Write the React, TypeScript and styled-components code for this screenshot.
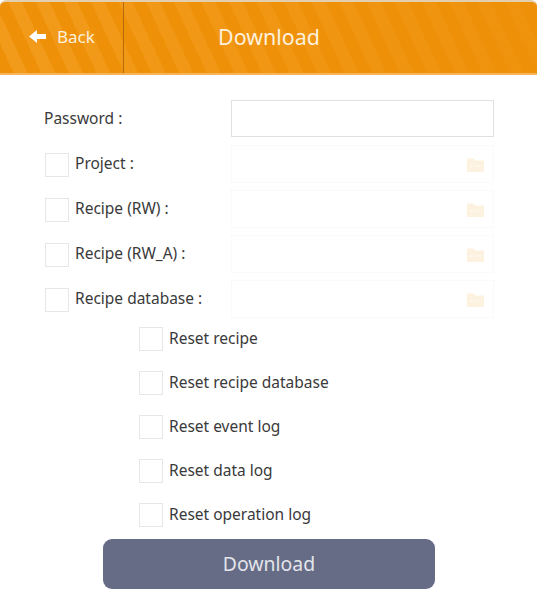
import React from "react";
import styled, { createGlobalStyle } from "styled-components";

const Global = createGlobalStyle`
  html, body { margin: 0; padding: 0; background: #fff; }
  body { font-family: "Noto Sans", "Open Sans", sans-serif; }
`;

const Page = styled.div`
  width: 537px;
  height: 591px;
  overflow: hidden;
  background: #fff;
  display: flex;
  flex-direction: column;
`;

const Header = styled.header`
  height: 75px;
  box-sizing: border-box;
  display: flex;
  align-items: stretch;
  border-top: 2px solid #e3cfae;
  border-bottom: 2px solid #f6b55a;
  border-radius: 6px 6px 0 0;
  background:
    linear-gradient(100deg, rgba(238, 144, 8, 0) 5%, rgba(238, 144, 8, 0.75) 100%),
    repeating-linear-gradient(65deg, #ee9008 0 12.5px, #f29a1a 12.5px 25px);
  color: #fff;
  flex: none;
`;

const BackButton = styled.div`
  width: 124px;
  box-sizing: border-box;
  padding: 0 0 2px 29px;
  display: flex;
  align-items: center;
  gap: 11px;
  border-right: 1px solid #b56c08;
  font-size: 17px;
  color: #fdf0dc;
`;

const Title = styled.h1`
  margin: 0;
  width: 290px;
  display: flex;
  align-items: center;
  justify-content: center;
  font-size: 21.4px;
  font-weight: 400;
  color: #fdf0dc;
  padding-bottom: 3px;
`;

const Form = styled.main`
  flex: 1;
  display: flex;
  flex-direction: column;
  padding: 25px 43px 0 44px;
`;

const PasswordRow = styled.div`
  height: 37px;
  display: flex;
  align-items: center;
  justify-content: space-between;
  margin-bottom: 8px;
`;

const Label = styled.label<{ $lift: number }>`
  font-size: 15.5px;
  color: #3a3a3a;
  white-space: nowrap;
  padding-bottom: ${(p) => p.$lift}px;
`;

const PasswordInput = styled.div`
  width: 263px;
  height: 37px;
  box-sizing: border-box;
  border: 1px solid #e0e0e0;
  background: #fff;
`;

const FileRow = styled.div`
  height: 38px;
  margin-bottom: 7px;
  display: flex;
  align-items: center;
  justify-content: space-between;
`;

const CheckLabel = styled.div`
  display: flex;
  align-items: center;
  gap: 6px;
  padding: 2px 0 0 1px;
`;

const Check = styled.span`
  display: block;
  width: 24px;
  height: 24px;
  box-sizing: border-box;
  border: 1px solid #e6e6e6;
  background: #fff;
  flex: none;
`;

const PathField = styled.div`
  width: 263px;
  height: 38px;
  box-sizing: border-box;
  border: 1px dotted #f6f6f6;
  display: flex;
  align-items: center;
  justify-content: flex-end;
  padding: 1px 9px 0 0;
`;

const ResetList = styled.div`
  display: flex;
  flex-direction: column;
  gap: 20px;
  padding: 0 0 0 95px;
  margin-top: 2px;
`;

const ResetRow = styled.div`
  height: 24px;
  display: flex;
  align-items: center;
  gap: 6px;
`;

const SubmitButton = styled.button`
  margin: 12px 0 0 59px;
  width: 332px;
  height: 50px;
  flex: none;
  border: none;
  border-radius: 9px;
  background: #666c86;
  color: #e3e4ea;
  font-family: inherit;
  font-size: 19.4px;
  padding: 0 0 1px;
`;

const FolderIcon = () => (
  <svg width="17" height="14" viewBox="0 0 17 14" aria-hidden="true">
    <path d="M0 0.5H6.5L8 2.5H17V14H0Z" fill="#fdf1e0" />
    <rect x="3.5" y="7" width="2" height="2" fill="#fffaf2" />
    <rect x="7.5" y="7" width="2" height="2" fill="#fffaf2" />
    <rect x="11.5" y="7" width="2" height="2" fill="#fffaf2" />
  </svg>
);

const BackArrow = () => (
  <svg width="17" height="13" viewBox="0 0 17 13" aria-hidden="true">
    <path d="M0 6.5L8 0V4H17V9H8V13Z" fill="#fff" />
  </svg>
);

const fileRows = ["Project :", "Recipe (RW) :", "Recipe (RW_A) :", "Recipe database :"];
const resetRows = [
  "Reset recipe",
  "Reset recipe database",
  "Reset event log",
  "Reset data log",
  "Reset operation log",
];

export default function App() {
  return (
    <Page>
      <Global />
      <Header>
        <BackButton>
          <BackArrow />
          <span>Back</span>
        </BackButton>
        <Title>Download</Title>
      </Header>
      <Form>
        <PasswordRow>
          <Label $lift={2}>Password :</Label>
          <PasswordInput />
        </PasswordRow>
        {fileRows.map((t) => (
          <FileRow key={t}>
            <CheckLabel>
              <Check />
              <Label $lift={4}>{t}</Label>
            </CheckLabel>
            <PathField>
              <FolderIcon />
            </PathField>
          </FileRow>
        ))}
        <ResetList>
          {resetRows.map((t) => (
            <ResetRow key={t}>
              <Check />
              <Label $lift={2}>{t}</Label>
            </ResetRow>
          ))}
        </ResetList>
        <SubmitButton>Download</SubmitButton>
      </Form>
    </Page>
  );
}
